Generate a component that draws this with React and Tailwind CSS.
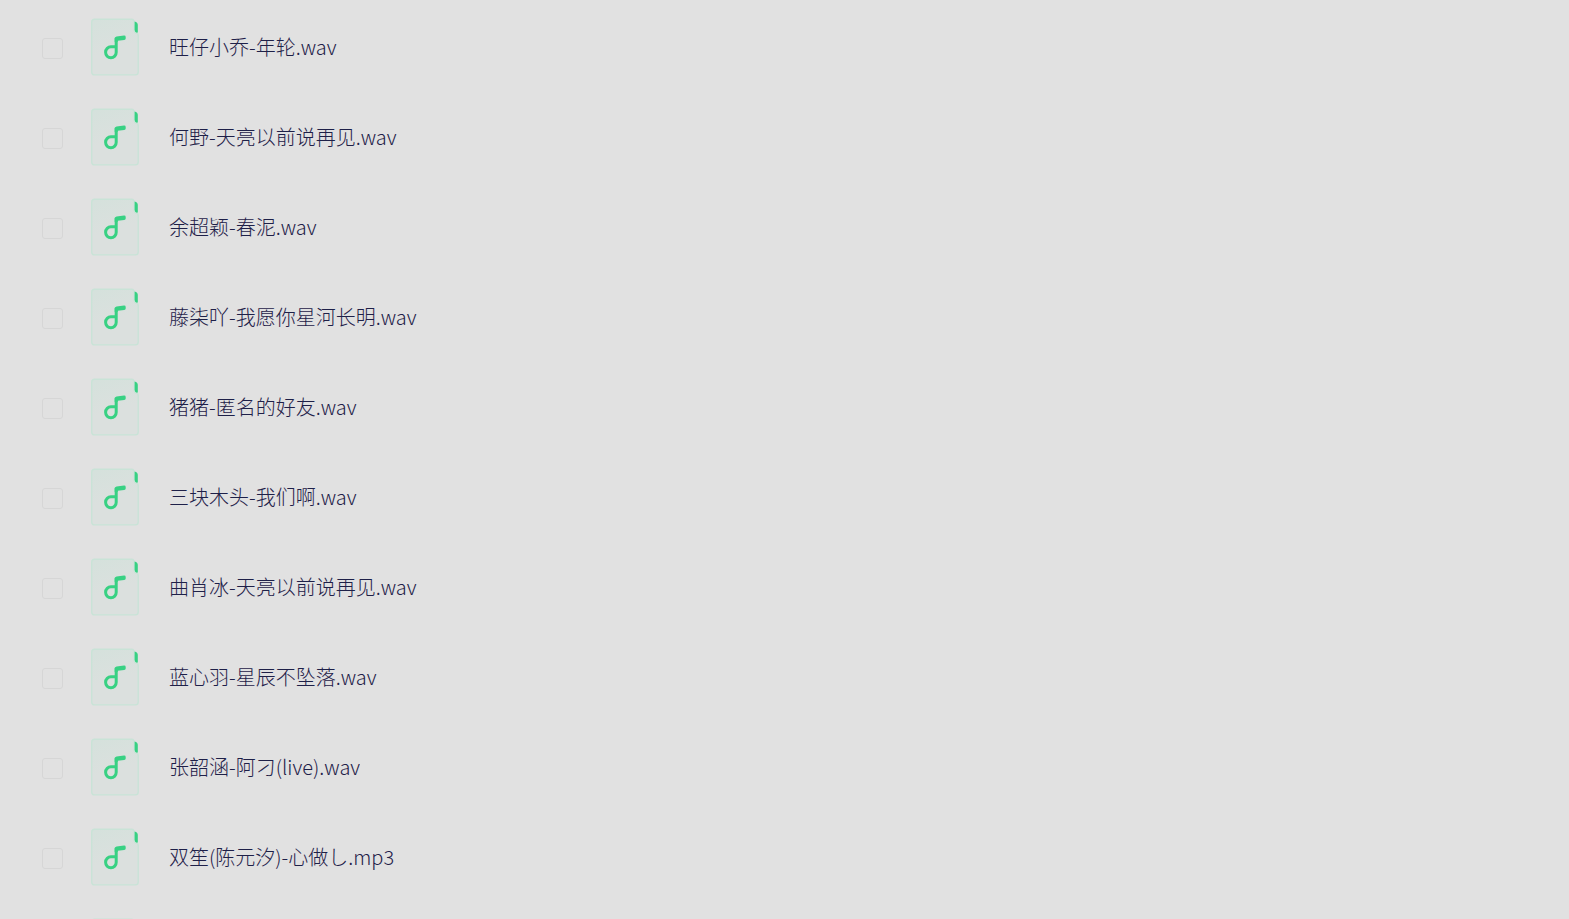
import React, { useState } from "react";

const files = [
  "旺仔小乔-年轮.wav",
  "何野-天亮以前说再见.wav",
  "余超颖-春泥.wav",
  "藤柒吖-我愿你星河长明.wav",
  "猪猪-匿名的好友.wav",
  "三块木头-我们啊.wav",
  "曲肖冰-天亮以前说再见.wav",
  "蓝心羽-星辰不坠落.wav",
  "张韶涵-阿刁(live).wav",
  "双笙(陈元汐)-心做し.mp3",
];

const AudioIcon = () => (
  <svg
    className="h-[60px] w-12 shrink-0"
    viewBox="0 0 48 60"
    fill="none"
    aria-hidden="true"
  >
    <defs>
      <linearGradient
        id="sheet"
        gradientUnits="userSpaceOnUse"
        x1="14"
        y1="0"
        x2="24"
        y2="32"
      >
        <stop stopColor="#d5e1dc" />
        <stop offset="1" stopColor="#dbe0de" />
      </linearGradient>
    </defs>
    <path
      d="M3.5 1.2H40.5Q43.2 1.2 43.2 4V11.5Q43.2 14.6 45.6 15.2Q47.2 15.7 47.2 17.5V54Q47.2 56.9 44.4 56.9H3.5Q.7 56.9 .7 54V4Q.7 1.2 3.5 1.2Z"
      fill="url(#sheet)"
      stroke="#c9e3d7"
      strokeWidth="1.4"
    />
    <path
      d="M43.6 3.4Q46.8 4.2 46.8 7V13.9Q46.8 14.9 45.8 14.7Q43.6 14.2 43.6 12Z"
      fill="#38d183"
    />
    <path
      d="M25.2 28.8H20A5.3 5.5 0 1 0 25.2 34.2V19.8"
      stroke="#38d183"
      strokeWidth="3"
    />
    <path
      d="M23.7 20.5Q23.7 18.6 25.6 18.4L33 17.6Q34.7 17.5 34.7 19V20.6Q34.7 21.8 33.2 22L26.7 22.8V24H23.7Z"
      fill="#38d183"
    />
  </svg>
);

const FileRow = ({ name, checked, onToggle }) => (
  <li>
    <label className="flex h-[90px] items-center pl-[42px]">
      <input
        type="checkbox"
        checked={checked}
        onChange={onToggle}
        className="mr-7 h-[21px] w-[21px] shrink-0 appearance-none rounded-[3px] border border-[#d6d6d6] checked:border-[#38d183] checked:bg-[#38d183]"
      />
      <AudioIcon />
      <span className="ml-[30px] truncate pb-0.5">{name}</span>
    </label>
  </li>
);

const App = () => {
  const [selected, setSelected] = useState([]);

  const toggle = (name) => {
    setSelected((prev) =>
      prev.includes(name) ? prev.filter((n) => n !== name) : [...prev, name]
    );
  };

  return (
    <main className="h-screen overflow-hidden bg-[#e1e1e1] font-['Noto_Sans_CJK_SC',sans-serif] text-xl font-light text-[#1e2048]">
      <ul className="pt-[3px]">
        {files.map((name) => (
          <FileRow
            key={name}
            name={name}
            checked={selected.includes(name)}
            onToggle={() => toggle(name)}
          />
        ))}
        {/* next page placeholder */}
        <li className="flex h-[90px] items-center pl-[91px]">
          <AudioIcon />
        </li>
      </ul>
    </main>
  );
};

export default App;
